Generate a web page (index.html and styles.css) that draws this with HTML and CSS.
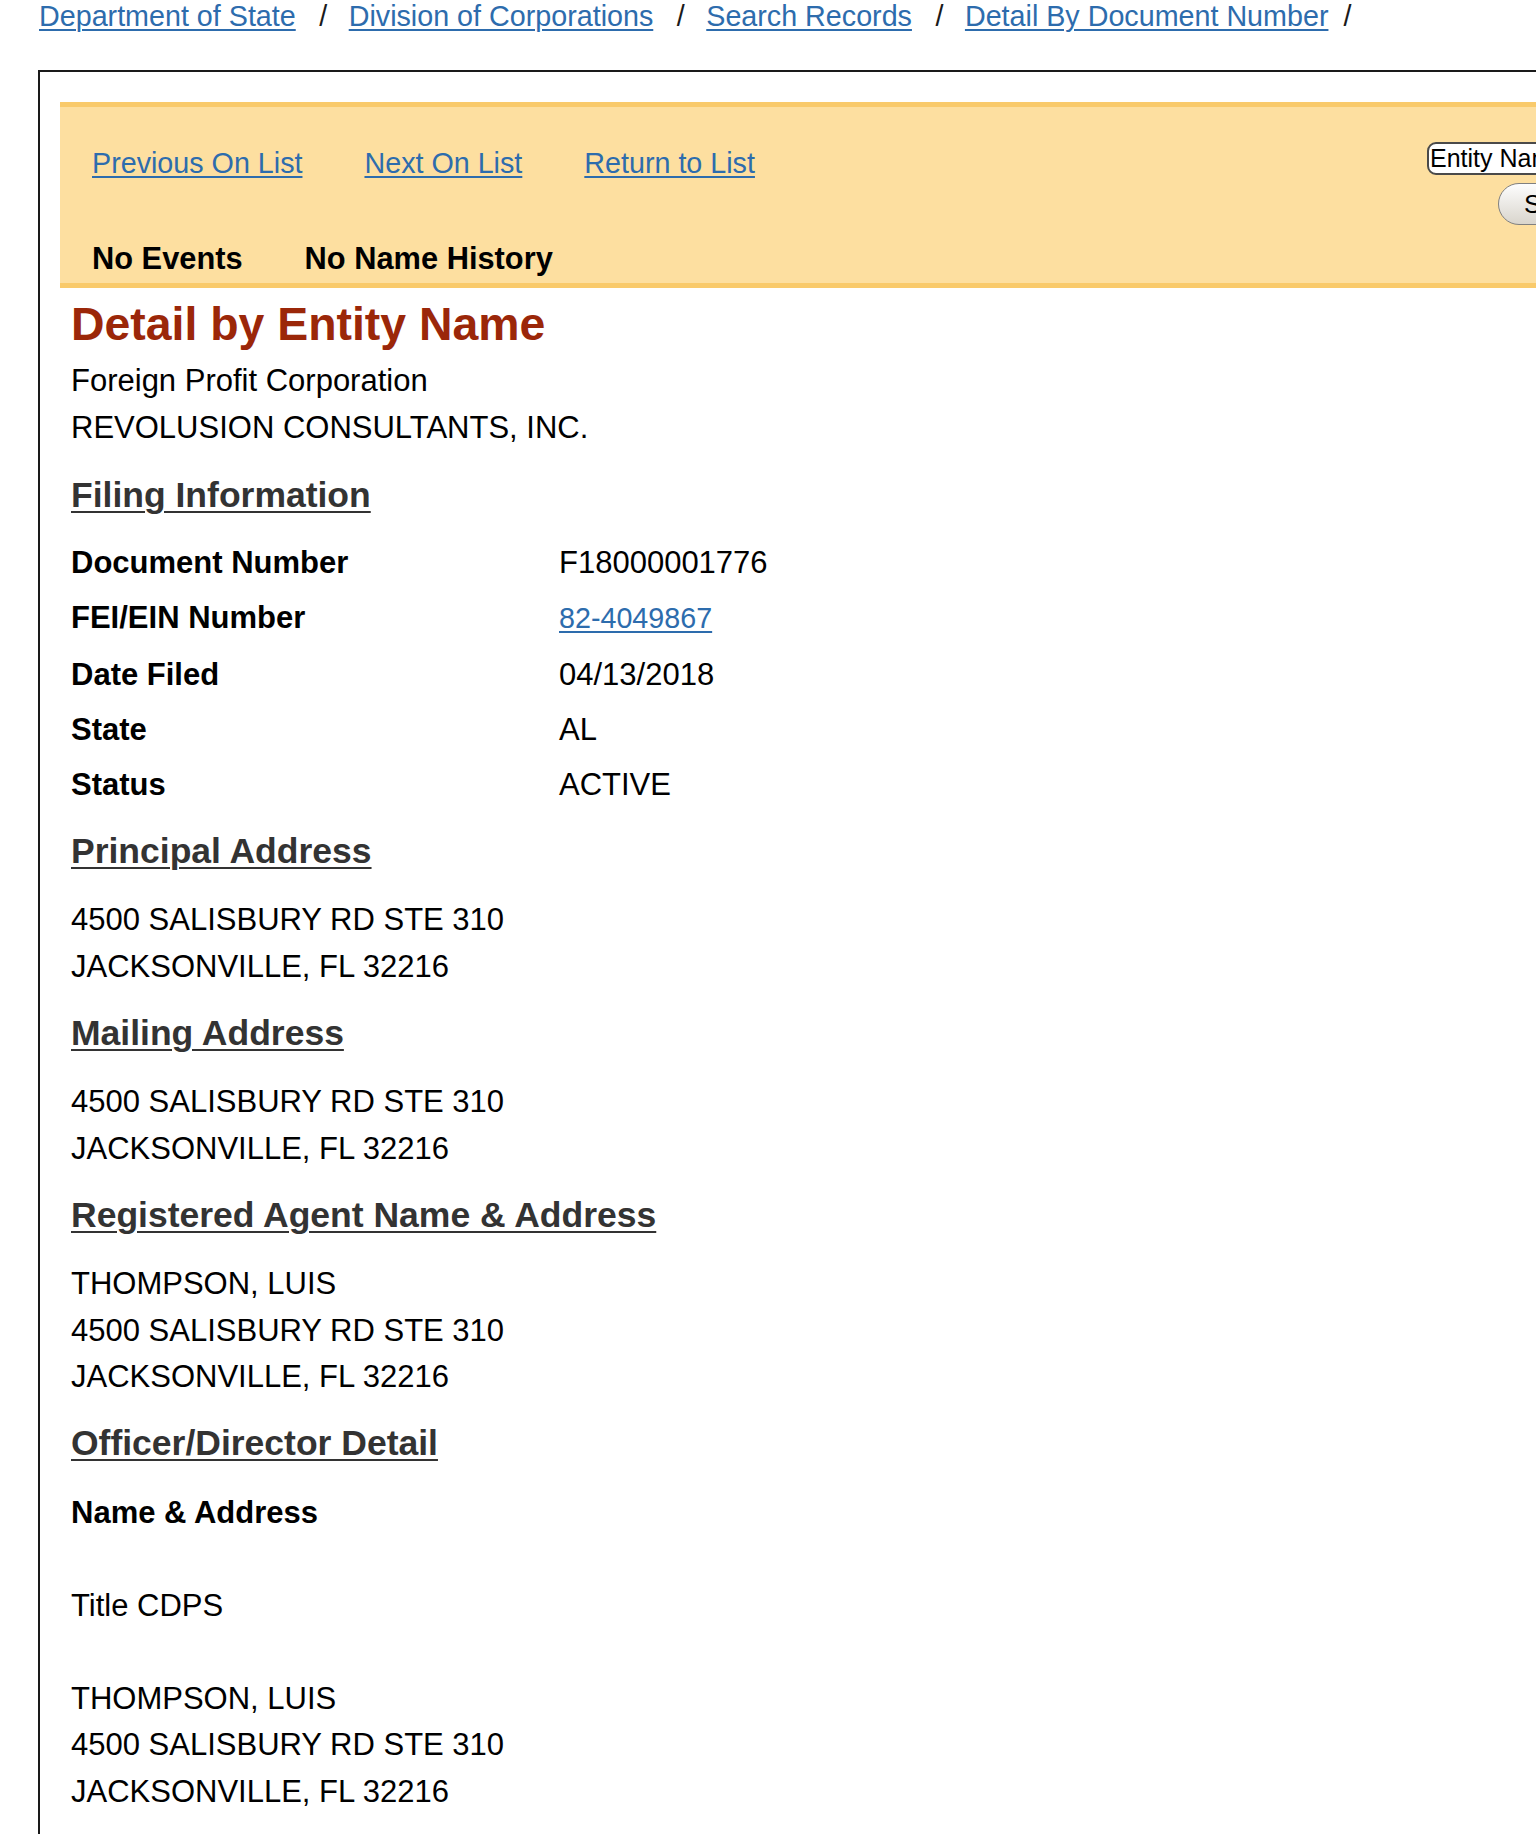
FILE: index.html
```html
<!DOCTYPE html>
<html lang="en">
<head>
<meta charset="utf-8">
<title>Detail by Entity Name</title>
<link rel="stylesheet" href="styles.css">
</head>
<body>
<nav class="breadcrumb">
  <a href="#">Department of State</a><span class="sep">/</span><a href="#">Division of Corporations</a><span class="sep">/</span><a href="#">Search Records</a><span class="sep">/</span><a href="#">Detail By Document Number</a><span class="sep last">/</span>
</nav>
<div class="frame">
  <div class="band">
    <div class="band-nav">
      <div class="nav-links">
        <a href="#">Previous On List</a>
        <a href="#">Next On List</a>
        <a href="#">Return to List</a>
      </div>
      <div class="nav-events">
        <span>No Events</span>
        <span>No Name History</span>
      </div>
    </div>
    <form class="band-search">
      <input class="search-input" type="text" value="Entity Name" readonly>
      <button class="search-btn" type="button">Search</button>
    </form>
  </div>
  <div class="detail">
    <h1 class="title">Detail by Entity Name</h1>
    <div class="lines">
      <div>Foreign Profit Corporation</div>
      <div>REVOLUSION CONSULTANTS, INC.</div>
    </div>

    <h2 class="section first">Filing Information</h2>
    <div class="filing">
      <div class="label">Document Number</div><div class="value">F18000001776</div>
      <div class="label">FEI/EIN Number</div><div class="value"><a href="#">82-4049867</a></div>
      <div class="label">Date Filed</div><div class="value">04/13/2018</div>
      <div class="label">State</div><div class="value">AL</div>
      <div class="label">Status</div><div class="value">ACTIVE</div>
    </div>

    <h2 class="section">Principal Address</h2>
    <div class="lines">
      <div>4500 SALISBURY RD STE 310</div>
      <div>JACKSONVILLE, FL 32216</div>
    </div>

    <h2 class="section">Mailing Address</h2>
    <div class="lines">
      <div>4500 SALISBURY RD STE 310</div>
      <div>JACKSONVILLE, FL 32216</div>
    </div>

    <h2 class="section">Registered Agent Name &amp; Address</h2>
    <div class="lines">
      <div>THOMPSON, LUIS</div>
      <div>4500 SALISBURY RD STE 310</div>
      <div>JACKSONVILLE, FL 32216</div>
    </div>

    <h2 class="section">Officer/Director Detail</h2>
    <div class="lines">
      <div class="strong">Name &amp; Address</div>
      <div class="blank">&nbsp;</div>
      <div>Title CDPS</div>
      <div class="blank">&nbsp;</div>
      <div>THOMPSON, LUIS</div>
      <div>4500 SALISBURY RD STE 310</div>
      <div>JACKSONVILLE, FL 32216</div>
    </div>
  </div>
</div>
</body>
</html>
```

FILE: styles.css
```css
html, body {
  margin: 0;
  padding: 0;
  height: 1834px;
  overflow: hidden;
  background: #ffffff;
}

body {
  font-family: "Liberation Sans", Arial, Helvetica, sans-serif;
  color: #000000;
  font-size: 31px;
}

a {
  color: #2d6cad;
  text-decoration: underline;
  text-decoration-thickness: 1.5px;
  text-underline-offset: 3px;
}

.breadcrumb {
  padding-left: 39px;
  height: 33px;
  font-size: 28.7px;
  line-height: 33px;
  white-space: nowrap;
}

.breadcrumb .sep {
  color: #1a1a1a;
  margin: 0 21.5px 0 23.5px;
}

.breadcrumb .sep.last {
  margin: 0 0 0 15px;
}

.frame {
  margin-top: 37px;
  margin-left: 38px;
  width: 1800px;
  min-height: 1900px;
  border-top: 2px solid #1a1a1a;
  border-left: 2px solid #1a1a1a;
  padding: 30px 0 0 20px;
}

.band {
  display: flex;
  background: #fddfa0;
  border-top: 5px solid #f9ca6b;
  border-bottom: 5px solid #f9ca6b;
  height: 176px;
}

.band-nav {
  width: 1335px;
  padding-left: 32px;
  flex: none;
}

.nav-links {
  display: flex;
  gap: 62px;
  padding-top: 40px;
  font-size: 28.7px;
  line-height: 33px;
}

.nav-events {
  display: flex;
  gap: 62px;
  margin-top: 61px;
  font-size: 30.8px;
  font-weight: bold;
  line-height: 36px;
}

.band-search {
  margin: 0;
  padding-top: 35px;
  display: flex;
  flex-direction: column;
  align-items: flex-end;
  width: 240px;
}

.search-input {
  box-sizing: border-box;
  width: 240px;
  height: 33px;
  margin: 0;
  padding: 0 1px;
  border: 2px solid #4a4a4a;
  border-radius: 9px;
  background: #ffffff;
  font-family: "Liberation Sans", Arial, sans-serif;
  font-size: 25px;
  line-height: 29px;
  color: #000000;
  outline: none;
}

.search-btn {
  box-sizing: border-box;
  margin-top: 8px;
  width: 169px;
  height: 42px;
  padding: 0 20px 0 25px;
  text-align: left;
  border: 1.5px solid #808080;
  border-radius: 21px;
  background: linear-gradient(#fdfdfd, #d9d5cd);
  font-family: "Liberation Sans", Arial, sans-serif;
  font-size: 26px;
  color: #000000;
}

.detail {
  padding-left: 11px;
}

.title {
  margin: 9px 0 7px;
  font-size: 46.4px;
  line-height: 54px;
  font-weight: bold;
  color: #9b2709;
}

.lines {
  line-height: 46.5px;
}

.strong {
  font-weight: bold;
}

.section {
  margin: 20.5px 0 24.5px;
  font-size: 35.5px;
  line-height: 44px;
  font-weight: bold;
  color: #333333;
  text-decoration: underline;
  text-decoration-thickness: 2px;
  text-underline-offset: 4px;
}

.section.first {
  margin: 21.5px 0 22.5px;
}

.filing {
  display: grid;
  grid-template-columns: 488px auto;
  row-gap: 8.25px;
  line-height: 47px;
}

.filing .label {
  font-weight: bold;
}

.filing .value a {
  font-size: 28.7px;
}
```
